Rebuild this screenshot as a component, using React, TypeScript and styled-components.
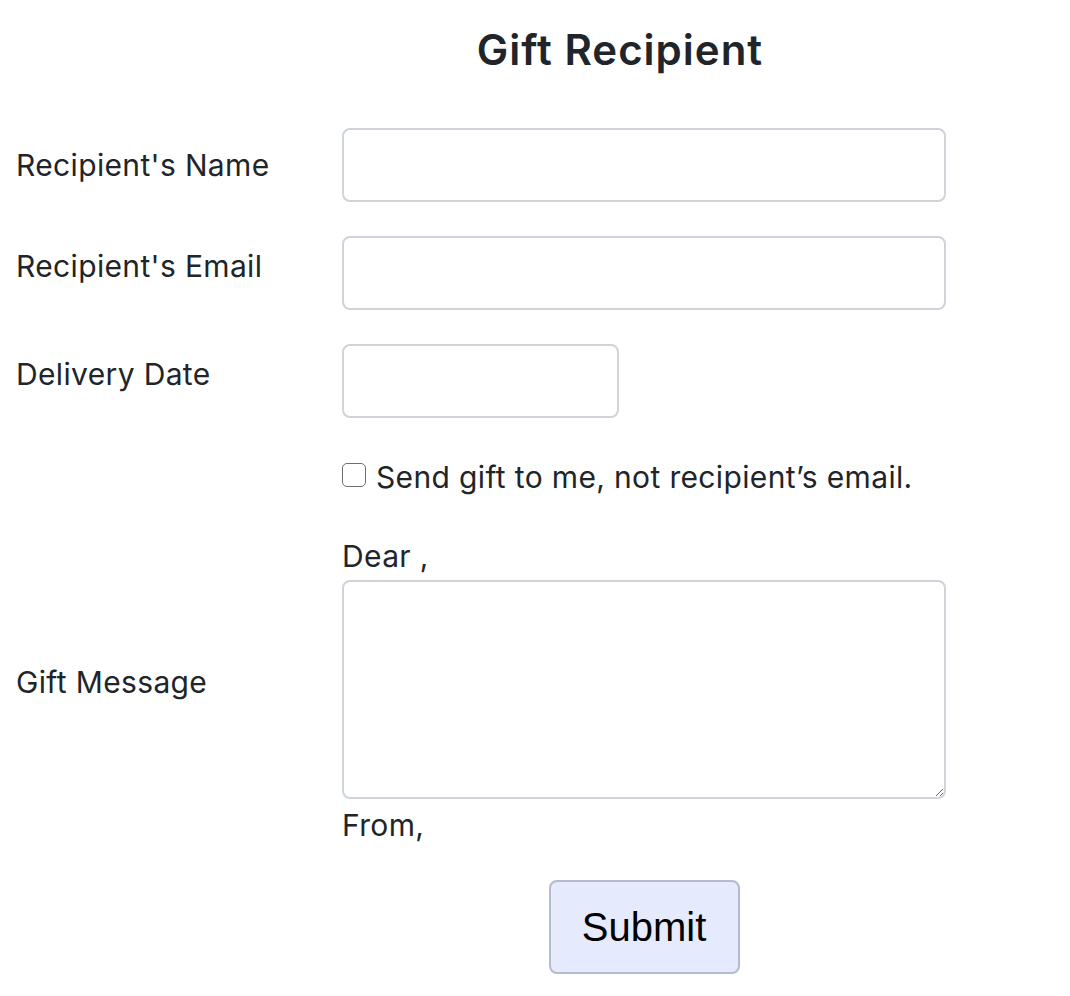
import React from "react";
import styled, { createGlobalStyle } from "styled-components";

const GlobalStyle = createGlobalStyle`
  html, body { margin: 0; padding: 0; background: #ffffff; }
  body {
    font-family: Inter, "Noto Sans", "Liberation Sans", sans-serif;
    color: #212529;
  }
  * { box-sizing: border-box; }
`;

const Page = styled.div`
  padding: 26px 0 40px 16px;
  width: 1070px;
`;

const Title = styled.h1`
  margin: 0;
  padding-left: 154px;
  width: 1054px;
  text-align: center;
  font-size: 42px;
  line-height: 48px;
  font-weight: 600;
  letter-spacing: 1px;
  color: #212529;
`;

const Form = styled.form`
  margin-top: 54px;
  display: grid;
  grid-template-columns: 326px 604px;
  row-gap: 34px;
`;

const Label = styled.label<{ $offset?: number; $center?: boolean }>`
  font-size: 30px;
  line-height: 36px;
  letter-spacing: 0.35px;
  padding-top: ${(p) => p.$offset ?? 0}px;
  align-self: ${(p) => (p.$center ? "center" : "start")};
  color: #212529;
`;

const TextInput = styled.input<{ $width?: number }>`
  display: block;
  width: ${(p) => (p.$width ? `${p.$width}px` : "100%")};
  height: 74px;
  border: 2px solid #ced4da;
  border-radius: 8px;
  padding: 0 20px;
  font-size: 30px;
  font-family: inherit;
  color: #212529;
  background: #fff;
  outline: none;
`;

const CheckRow = styled.label`
  grid-column: 2;
  display: flex;
  align-items: center;
  gap: 10px;
  margin-top: 7px;
  font-size: 30px;
  line-height: 36px;
  letter-spacing: 0.35px;
`;

const Check = styled.input`
  appearance: none;
  margin: 0;
  width: 24px;
  height: 24px;
  border: 1.5px solid #6e6e6e;
  border-radius: 5px;
  background: #fff;
  flex: none;
  position: relative;
  top: -2px;
`;

const MessageBlock = styled.div`
  grid-column: 2;
  display: flex;
  flex-direction: column;
  margin-top: 9px;
`;

const Line = styled.div<{ $gapTop?: number; $gapBottom?: number }>`
  font-size: 30px;
  line-height: 36px;
  letter-spacing: 0.35px;
  margin-top: ${(p) => p.$gapTop ?? 0}px;
  margin-bottom: ${(p) => p.$gapBottom ?? 0}px;
`;

const Message = styled.textarea`
  display: block;
  width: 100%;
  height: 219px;
  border: 2px solid #ced4da;
  border-radius: 8px;
  padding: 12px 20px;
  font-size: 30px;
  font-family: inherit;
  color: #212529;
  background: #fff;
  outline: none;
  resize: vertical;
`;

const ButtonRow = styled.div`
  grid-column: 2;
  display: flex;
  justify-content: center;
  margin-top: 3px;
`;

const SubmitButton = styled.button`
  width: 191px;
  height: 94px;
  background: #e5eafd;
  border: 2px solid #b4bbcc;
  border-radius: 8px;
  font-family: "Liberation Sans", Arial, sans-serif;
  font-size: 40px;
  color: #000;
  cursor: pointer;
  padding: 0;
`;

export default function App() {
  return (
    <>
      <GlobalStyle />
      <Page>
        <Title>Gift Recipient</Title>
        <Form onSubmit={(e) => e.preventDefault()}>
          <Label htmlFor="name" $center>
            Recipient's Name
          </Label>
          <TextInput id="name" type="text" />

          <Label htmlFor="email" $offset={12}>
            Recipient's Email
          </Label>
          <TextInput id="email" type="text" />

          <Label htmlFor="date" $offset={12}>
            Delivery Date
          </Label>
          <TextInput id="date" type="text" $width={277} />

          <CheckRow>
            <Check type="checkbox" />
            Send gift to me, not recipient’s email.
          </CheckRow>

          <Label htmlFor="msg" $offset={135}>
            Gift Message
          </Label>
          <MessageBlock>
            <Line $gapBottom={6}>Dear ,</Line>
            <Message id="msg" />
            <Line $gapTop={8}>From,</Line>
          </MessageBlock>

          <ButtonRow>
            <SubmitButton type="submit">Submit</SubmitButton>
          </ButtonRow>
        </Form>
      </Page>
    </>
  );
}
